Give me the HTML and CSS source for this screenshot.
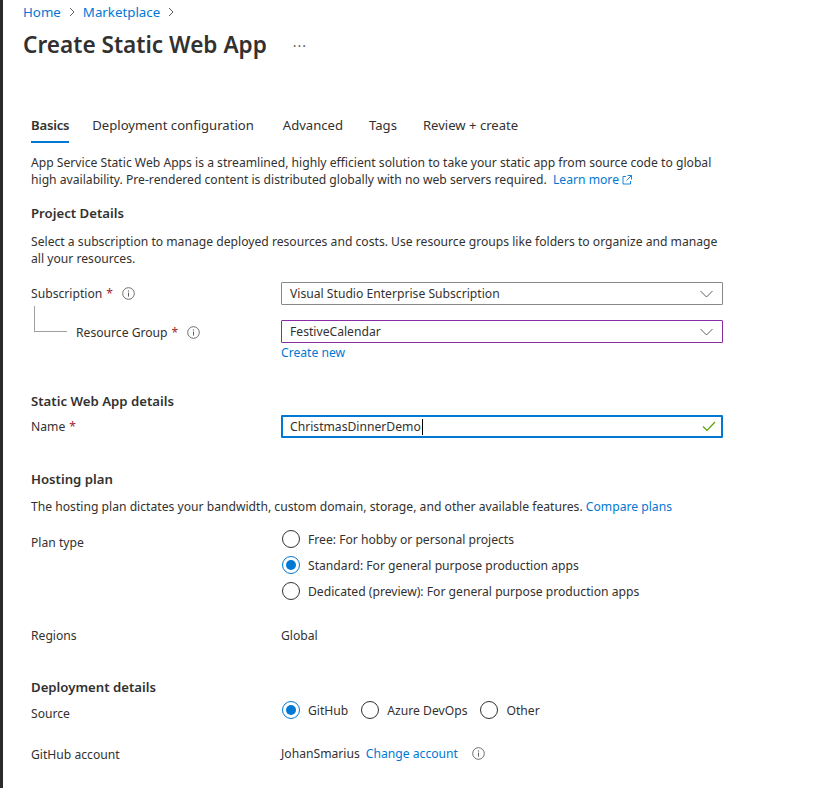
FILE: index.html
```html
<!DOCTYPE html>
<html lang="en">
<head>
<meta charset="utf-8">
<title>Create Static Web App</title>
<link rel="stylesheet" href="styles.css">
</head>
<body>
<div class="shell">
  <main class="blade">
    <nav class="breadcrumb">
      <a class="crumb" href="#">Home</a>
      <svg class="crumb-sep" width="8" height="10" viewBox="0 0 8 10"><path d="M2 1 L6 5 L2 9" fill="none" stroke="#605e5c" stroke-width="1"/></svg>
      <a class="crumb" href="#">Marketplace</a>
      <svg class="crumb-sep" width="8" height="10" viewBox="0 0 8 10"><path d="M2 1 L6 5 L2 9" fill="none" stroke="#605e5c" stroke-width="1"/></svg>
    </nav>
    <div class="title-row">
      <h1 class="title">Create Static Web App</h1>
      <span class="more">&middot;&middot;&middot;</span>
    </div>

    <div class="content">
      <div class="tabs">
        <span class="tab tab-active">Basics</span>
        <span class="tab">Deployment configuration</span>
        <span class="tab">Advanced</span>
        <span class="tab">Tags</span>
        <span class="tab">Review + create</span>
      </div>

      <p class="text intro">App Service Static Web Apps is a streamlined, highly efficient solution to take your static app from source code to global<br>high availability. Pre-rendered content is distributed globally with no web servers required.&nbsp; <a class="link" href="#">Learn more <svg class="ext" width="10" height="10" viewBox="0 0 10 10"><path d="M4 1.5 H1 V9 H8.5 V6" fill="none" stroke="#0078d4" stroke-width="0.9"/><path d="M5.5 0.5 H9.5 V4.5 M9.5 0.5 L4.5 5.5" fill="none" stroke="#0078d4" stroke-width="0.9"/></svg></a></p>

      <h2 class="section s-project">Project Details</h2>
      <p class="text s-project-desc">Select a subscription to manage deployed resources and costs. Use resource groups like folders to organize and manage<br>all your resources.</p>

      <div class="row r-sub">
        <div class="label">Subscription <span class="req">*</span>
          <svg class="info" width="13" height="13" viewBox="0 0 13 13"><circle cx="6.5" cy="6.5" r="5.8" fill="none" stroke="#605e5c" stroke-width="0.9"/><path d="M6.5 5.6 V9.6" stroke="#605e5c" stroke-width="1"/><circle cx="6.5" cy="3.9" r="0.7" fill="#605e5c"/></svg>
        </div>
        <div class="control">
          <div class="select">Visual Studio Enterprise Subscription
            <svg class="chev" width="13" height="8" viewBox="0 0 13 8"><path d="M0.5 1 L6.5 7 L12.5 1" fill="none" stroke="#605e5c" stroke-width="1"/></svg>
          </div>
        </div>
      </div>

      <div class="row r-rg">
        <div class="label label-nested"><span class="elbow"></span>Resource Group <span class="req">*</span>
          <svg class="info" width="13" height="13" viewBox="0 0 13 13"><circle cx="6.5" cy="6.5" r="5.8" fill="none" stroke="#605e5c" stroke-width="0.9"/><path d="M6.5 5.6 V9.6" stroke="#605e5c" stroke-width="1"/><circle cx="6.5" cy="3.9" r="0.7" fill="#605e5c"/></svg>
        </div>
        <div class="control">
          <div class="select select-focus">FestiveCalendar
            <svg class="chev" width="13" height="8" viewBox="0 0 13 8"><path d="M0.5 1 L6.5 7 L12.5 1" fill="none" stroke="#605e5c" stroke-width="1"/></svg>
          </div>
          <a class="link create-new" href="#">Create new</a>
        </div>
      </div>

      <h2 class="section s-swa">Static Web App details</h2>
      <div class="row r-name">
        <div class="label">Name <span class="req">*</span></div>
        <div class="control">
          <div class="input"><span class="value">ChristmasDinnerDemo</span><span class="caret"></span>
            <svg class="check" width="14" height="11" viewBox="0 0 14 11"><path d="M1 5.5 L5 9.5 L13 1" fill="none" stroke="#57a300" stroke-width="1.2"/></svg>
          </div>
        </div>
      </div>

      <h2 class="section s-hosting">Hosting plan</h2>
      <p class="text s-hosting-desc">The hosting plan dictates your bandwidth, custom domain, storage, and other available features. <a class="link" href="#">Compare plans</a></p>

      <div class="row r-plan">
        <div class="label label-radio">Plan type</div>
        <div class="control radio-col">
          <div class="radio"><span class="dot"></span>Free: For hobby or personal projects</div>
          <div class="radio"><span class="dot dot-on"></span>Standard: For general purpose production apps</div>
          <div class="radio"><span class="dot"></span>Dedicated (preview): For general purpose production apps</div>
        </div>
      </div>

      <div class="row r-regions">
        <div class="label">Regions</div>
        <div class="control plain">Global</div>
      </div>

      <h2 class="section s-deploy">Deployment details</h2>
      <div class="row r-source">
        <div class="label label-radio">Source</div>
        <div class="control radio-line">
          <div class="radio"><span class="dot dot-on"></span>GitHub</div>
          <div class="radio"><span class="dot"></span>Azure DevOps</div>
          <div class="radio"><span class="dot"></span>Other</div>
        </div>
      </div>

      <div class="row r-account">
        <div class="label label-account">GitHub account</div>
        <div class="control plain account">JohanSmarius <a class="link" href="#">Change account</a>
          <svg class="info" width="13" height="13" viewBox="0 0 13 13"><circle cx="6.5" cy="6.5" r="5.8" fill="none" stroke="#605e5c" stroke-width="0.9"/><path d="M6.5 5.6 V9.6" stroke="#605e5c" stroke-width="1"/><circle cx="6.5" cy="3.9" r="0.7" fill="#605e5c"/></svg>
        </div>
      </div>
    </div>
  </main>
</div>
</body>
</html>
```

FILE: styles.css
```css
* { box-sizing: border-box; }

html, body {
  margin: 0;
  padding: 0;
  background: #ffffff;
}

body {
  font-family: "Noto Sans", "Open Sans", Arial, sans-serif;
  font-size: 12.15px;
  color: #323130;
}

.shell {
  display: flex;
  min-height: 788px;
  border-left: 3px solid #2b2b2b;
}

.blade {
  flex: 1;
  padding-left: 20px;
}

a { text-decoration: none; }

.link { color: #0078d4; }

/* breadcrumb */
.breadcrumb {
  display: flex;
  align-items: center;
  gap: 7px;
  height: 18px;
  margin-top: 3px;
  font-size: 13.3px;
}
.crumb { color: #0078d4; }
.crumb-sep { display: block; }

/* title */
.title-row {
  display: flex;
  align-items: center;
  margin-top: 6px;
  height: 36px;
}
.title {
  margin: 0;
  font-size: 22.6px;
  font-weight: 600;
  color: #323130;
  line-height: 36px;
}
.more {
  margin-left: 26px;
  font-size: 14px;
  color: #605e5c;
  letter-spacing: 1px;
}

/* content */
.content {
  padding-left: 8px;
  width: 740px;
}

.tabs {
  display: flex;
  margin-top: 53px;
}
.tab {
  font-size: 13.1px;
  line-height: 18px;
  padding-bottom: 7px;
  border-bottom: 2px solid transparent;
  color: #323130;
  margin-right: 26px;
}
.tab:nth-child(1) { margin-right: 23px; }
.tab:nth-child(2) { margin-right: 29px; }
.tab-active {
  font-weight: 600;
  letter-spacing: -0.2px;
  border-bottom-color: #0078d4;
}

.text {
  margin: 0;
  line-height: 17px;
}

.intro { margin-top: 11px; }

.ext { vertical-align: -1px; }

.section {
  margin: 0;
  font-size: 13.2px;
  font-weight: 600;
  line-height: 20px;
  color: #323130;
}

.s-project { margin-top: 15px; }
.s-project-desc { margin-top: 10px; }

.row {
  display: grid;
  grid-template-columns: 250px 442px;
}

.label {
  display: flex;
  align-items: center;
  line-height: 17px;
  height: 23px;
}
.req {
  color: #a4262c;
  margin-left: 4px;
}
.info {
  margin-left: 9px;
  display: block;
}

.elbow {
  align-self: flex-start;
  margin-top: -15px;
  margin-left: 3px;
  margin-right: 9px;
  width: 33px;
  height: 26px;
  border-left: 1px solid #a19f9d;
  border-bottom: 1px solid #a19f9d;
}

.r-sub { margin-top: 15px; }
.r-rg { margin-top: 15px; }
.r-rg .label { padding-top: 1px; }

.select {
  height: 23px;
  border: 1px solid #8a8886;
  border-radius: 1px;
  display: flex;
  align-items: center;
  justify-content: space-between;
  padding: 0 9px 0 8px;
  line-height: 17px;
}
.select-focus { border-color: #8a2da5; }
.chev { display: block; }

.create-new {
  display: block;
  margin-top: 1px;
  line-height: 17px;
}

.s-swa { margin-top: 30px; }
.r-name { margin-top: 4px; }

.input {
  height: 23px;
  border: 2px solid #0078d4;
  border-radius: 1px;
  display: flex;
  align-items: center;
  padding: 0 5px 0 7px;
  line-height: 17px;
}
.caret {
  width: 1px;
  height: 16px;
  background: #000;
  margin-left: 1px;
}
.check { margin-left: auto; display: block; }

.s-hosting { margin-top: 31px; }
.s-hosting-desc { margin-top: 9px; }

.r-plan { margin-top: 15px; }

.label-radio {
  align-items: flex-start;
  padding-top: 4px;
  height: auto;
}

.radio-col {
  display: flex;
  flex-direction: column;
  gap: 8px;
}
.radio {
  display: flex;
  align-items: center;
  height: 18px;
  line-height: 17px;
}
.dot {
  width: 18px;
  height: 18px;
  border: 1px solid #323130;
  border-radius: 50%;
  margin-left: 1px;
  margin-right: 8px;
  flex: none;
  display: flex;
  align-items: center;
  justify-content: center;
}
.dot-on { border-color: #0078d4; }
.dot-on::after {
  content: "";
  width: 10px;
  height: 10px;
  border-radius: 50%;
  background: #0078d4;
}

.r-regions { margin-top: 27px; }
.plain { line-height: 17px; }
.r-regions .label { height: 17px; }

.s-deploy { margin-top: 33px; }

.r-source { margin-top: 4px; }
.radio-line {
  display: flex;
  gap: 12px;
}

.r-account { margin-top: 22px; }
.label-account {
  height: auto;
  padding-top: 2px;
}
.account {
  display: flex;
  align-items: center;
  gap: 6px;
}
.account .info { margin-left: 8px; }
```
